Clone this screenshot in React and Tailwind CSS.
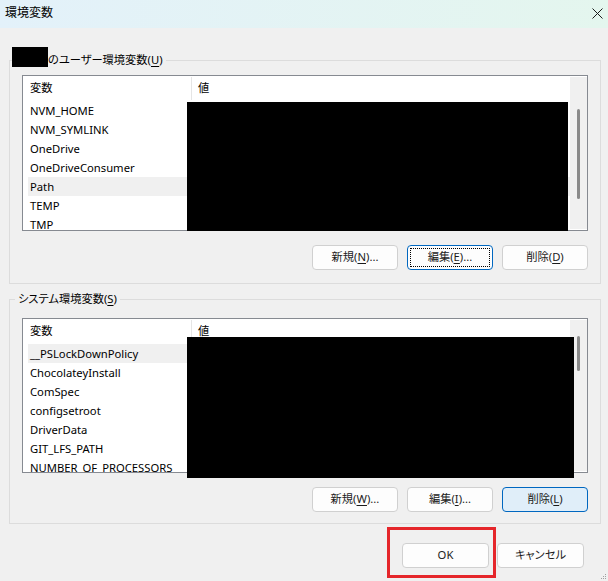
import clsx from 'clsx';

const userVars = ['NVM_HOME', 'NVM_SYMLINK', 'OneDrive', 'OneDriveConsumer', 'Path', 'TEMP', 'TMP'];
const sysVars = ['__PSLockDownPolicy', 'ChocolateyInstall', 'ComSpec', 'configsetroot', 'DriverData', 'GIT_LFS_PATH', 'NUMBER_OF_PROCESSORS'];

function Key({ children }) {
  return <span className="underline underline-offset-[2px] decoration-1">{children}</span>;
}

function Btn({ children, focused, active, className }) {
  return (
    <button
      className={clsx(
        'relative w-[86px] h-[25px] rounded-[4px] border text-[#1b1b1b] flex items-center justify-center',
        active ? 'bg-[#e0eef9] border-[#0067c0]' : 'bg-[#fdfdfd]',
        focused ? 'border-[#0067c0]' : !active && 'border-[#d0d0d0]',
        className
      )}
    >
      {focused && <span className="absolute inset-[2px] border border-dotted border-black" />}
      <span>{children}</span>
    </button>
  );
}

function ListView({ rows, selected, tall, thumb, black }) {
  return (
    <div className={clsx('relative border border-[#868a91] bg-white', tall ? 'h-[156px]' : 'h-[155px]')}>
      <div className="flex h-full">
        <div className="flex-1 overflow-hidden">
          <div className="flex h-[25px] items-center">
            <div className="w-[168px] pl-[7px]">変数</div>
            <div className="w-px h-[23px] bg-[#e5e5e5]" />
            <div className="pl-[6px]">値</div>
          </div>
          {rows.map((r, i) => (
            <div
              key={r}
              className={clsx('ml-[5px] h-[19px] pl-[2px] leading-[19px] whitespace-nowrap', i === selected && 'bg-[#f0f0f0]')}
            >
              {r}
            </div>
          ))}
        </div>
        <div className="w-[17px] my-px bg-[#f0f0f0]">
          <div className={clsx('ml-[7px] w-[3px] rounded-full bg-[#8a8a8a]', thumb)} />
        </div>
      </div>
      <div className={clsx('absolute left-[164px] bg-black', black)} />
    </div>
  );
}

export default function App() {
  return (
    <div className="relative w-[608px] h-[581px] overflow-hidden bg-[#f0f0f0] text-[11.25px] text-black font-['Noto_Sans','Noto_Sans_CJK_JP',sans-serif] [font-feature-settings:'palt']">
      <div className="flex h-[28px] items-center justify-between bg-gradient-to-r from-[#e3f1fa] to-[#e4f6ee] pl-[5px] pr-[5px] pb-[2px]">
        <span className="text-[12px]">環境変数</span>
        <svg width="11" height="11" viewBox="0 0 11 11" className="mt-[1px]">
          <path d="M0.5 0.5 L10.5 10.5 M10.5 0.5 L0.5 10.5" stroke="#1b1b1b" strokeWidth="1" />
        </svg>
      </div>

      <div className="pl-[9px] pr-[7px]">
        <div className="relative mt-[32px] h-[224px] border border-[#dcdcdc] pt-[14px] pl-[12px] pr-[12px]">
          <div className="absolute left-[2px] top-[-11px] flex h-[20px] items-center bg-[#f0f0f0] pr-[3px]">
            <span className="h-[20px] w-[36px] -translate-y-[3px] bg-black" />
            <span>
              のユーザー環境変数(<Key>U</Key>)
            </span>
          </div>
          <ListView rows={userVars} selected={4} tall thumb="mt-[32px] h-[90px]" black="top-[26px] w-[381px] h-[129px]" />
          <div className="mt-[14px] flex justify-end gap-[9px]">
            <Btn>
              新規(<Key>N</Key>)...
            </Btn>
            <Btn focused>
              編集(<Key>E</Key>)...
            </Btn>
            <Btn>
              削除(<Key>D</Key>)
            </Btn>
          </div>
        </div>

        <div className="relative mt-[15px] h-[225px] border border-[#dcdcdc] pt-[18px] pl-[12px] pr-[12px]">
          <div className="absolute left-[5px] top-[-11px] flex h-[20px] items-center bg-[#f0f0f0] px-[3px]">
            <span>
              システム環境変数(<Key>S</Key>)
            </span>
          </div>
          <ListView rows={sysVars} selected={0} thumb="mt-[16px] h-[35px]" black="top-[18px] w-[387px] h-[141px]" />
          <div className="mt-[14px] flex justify-end gap-[9px]">
            <Btn>
              新規(<Key>W</Key>)...
            </Btn>
            <Btn>
              編集(<Key>I</Key>)...
            </Btn>
            <Btn active>
              削除(<Key>L</Key>)
            </Btn>
          </div>
        </div>
      </div>

      <div className="mt-[19px] flex justify-end gap-[8px] pr-[24px]">
        <div className="relative">
          <Btn className="w-[87px]">OK</Btn>
          <span className="absolute left-[-15px] top-[-16px] h-[51px] w-[109px] border-[3px] border-[#e5262b]" />
        </div>
        <Btn className="w-[87px]">キャンセル</Btn>
      </div>

      <svg width="7" height="7" viewBox="0 0 7 7" className="absolute right-[1px] bottom-[1px]">
        <rect x="5" y="1" width="1" height="1" fill="#a0a0a0" />
        <rect x="3" y="3" width="1" height="1" fill="#a0a0a0" />
        <rect x="5" y="3" width="1" height="1" fill="#a0a0a0" />
        <rect x="1" y="5" width="1" height="1" fill="#a0a0a0" />
        <rect x="3" y="5" width="1" height="1" fill="#a0a0a0" />
        <rect x="5" y="5" width="1" height="1" fill="#a0a0a0" />
      </svg>
    </div>
  );
}
